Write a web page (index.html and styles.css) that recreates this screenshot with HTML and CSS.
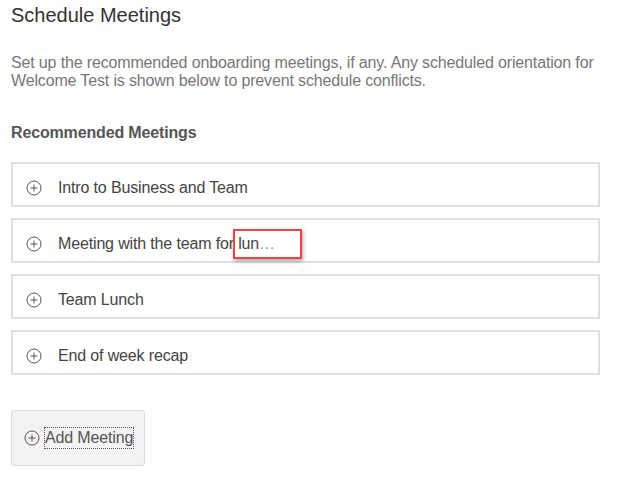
FILE: index.html
```html
<!DOCTYPE html>
<html lang="en">

<head>
    <meta charset="UTF-8">
    <meta name="viewport" content="width=device-width, initial-scale=1.0">
    <title>Schedule Meetings</title>
    <link rel="stylesheet" href="styles.css">
</head>

<body>
    <h1 class="title">Schedule Meetings</h1>
    <p class="intro">Set up the recommended onboarding meetings, if any. Any scheduled orientation for
        Welcome Test is shown below to prevent schedule conflicts.</p>

    <h2 class="section">Recommended Meetings</h2>

    <div class="meetings">
        <div class="meeting">
            <svg class="plus" width="16" height="16" viewBox="0 0 16 16"><circle cx="8" cy="8" r="7" /><path d="M8 4.5v7M4.5 8h7" /></svg>
            <span class="name">Intro to Business and Team</span>
        </div>
        <div class="meeting">
            <svg class="plus" width="16" height="16" viewBox="0 0 16 16"><circle cx="8" cy="8" r="7" /><path d="M8 4.5v7M4.5 8h7" /></svg>
            <span class="name">Meeting with the team for lun<span class="dots">…</span></span>
            <div class="highlight"></div>
        </div>
        <div class="meeting">
            <svg class="plus" width="16" height="16" viewBox="0 0 16 16"><circle cx="8" cy="8" r="7" /><path d="M8 4.5v7M4.5 8h7" /></svg>
            <span class="name">Team Lunch</span>
        </div>
        <div class="meeting">
            <svg class="plus" width="16" height="16" viewBox="0 0 16 16"><circle cx="8" cy="8" r="7" /><path d="M8 4.5v7M4.5 8h7" /></svg>
            <span class="name">End of week recap</span>
        </div>
    </div>

    <button class="add-btn">
        <svg class="plus" width="16" height="16" viewBox="0 0 16 16"><circle cx="8" cy="8" r="7" /><path d="M8 4.5v7M4.5 8h7" /></svg>
        <span class="add-label">Add Meeting</span>
    </button>
</body>

</html>
```

FILE: styles.css
```css
body {
    font-family: "Liberation Sans", Arial, sans-serif;
    background-color: #fff;
    margin: 0;
    padding: 4px 22px 0 11px;
}

.title {
    font-size: 20px;
    font-weight: normal;
    line-height: 23px;
    color: #333;
    margin: 0;
}

.intro {
    font-size: 16px;
    line-height: 18px;
    letter-spacing: -0.15px;
    color: #777;
    margin: 27px 0 0;
}

.section {
    font-size: 16px;
    font-weight: bold;
    line-height: 18px;
    letter-spacing: -0.15px;
    color: #555;
    margin: 34px 0 0;
}

.meetings {
    display: flex;
    flex-direction: column;
    gap: 11px;
    margin-top: 20px;
}

.meeting {
    position: relative;
    display: flex;
    align-items: center;
    gap: 16px;
    height: 45px;
    box-sizing: border-box;
    padding: 7px 0 0 13px;
    border: 2px solid #e0e0e0;
    font-size: 16px;
    letter-spacing: -0.15px;
    color: #444;
}

.plus {
    flex: none;
    fill: none;
    stroke: #555;
    stroke-width: 1;
}

.dots {
    color: #999;
}

.highlight {
    position: absolute;
    left: 220px;
    top: 9px;
    width: 65px;
    height: 26px;
    border: 2px solid #ee4444;
    box-shadow: 1px 2px 4px rgba(0, 0, 0, 0.35);
}

.add-btn {
    display: flex;
    align-items: center;
    gap: 5px;
    margin-top: 35px;
    width: 134px;
    height: 56px;
    padding: 0 0 0 12px;
    background-color: #f3f3f3;
    border: 1px solid #dcdcdc;
    border-radius: 3px;
    font-family: inherit;
    font-size: 16px;
    letter-spacing: -0.15px;
    color: #555;
    cursor: pointer;
}

.add-label {
    outline: 1px dotted #555;
    padding: 1px 0;
}
```
